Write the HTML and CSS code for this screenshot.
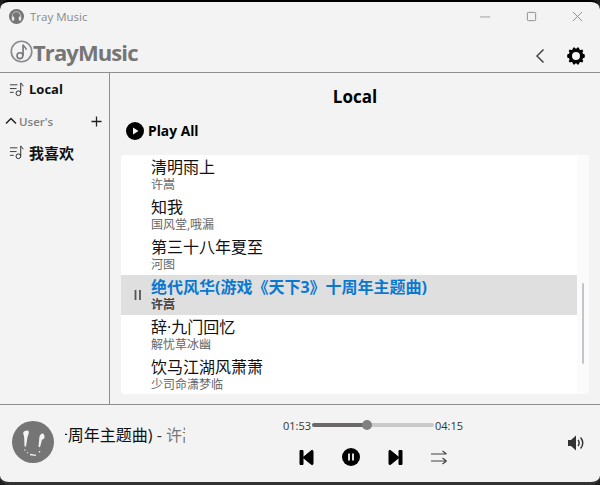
FILE: index.html
```html
<!DOCTYPE html>
<html lang="zh">
<head>
<meta charset="utf-8">
<title>Tray Music</title>
<link rel="stylesheet" href="styles.css">
</head>
<body>
<div class="window">
  <div class="titlebar">
    <svg class="app-icon" viewBox="0 0 16 16"><circle cx="8" cy="8" r="8" fill="#757575"/><path d="M3.500 9V7.500a4.500 4.500 0 0 1 9 0V9" stroke="#bdbdbd" stroke-width="1.100" fill="none"/><rect x="3" y="8" width="2.600" height="4.500" rx="1" fill="#e6e6e6"/><rect x="10.400" y="8" width="2.600" height="4.500" rx="1" fill="#e6e6e6"/></svg>
    <span class="app-title">Tray Music</span>
    <div class="win-buttons">
      <svg class="win-btn" viewBox="0 0 12 12"><path d="M0 6.500h11" stroke="#999" fill="none"/></svg>
      <svg class="win-btn" viewBox="0 0 12 12"><rect x="1.500" y="1.500" width="9" height="9" rx="1" stroke="#888" fill="none"/></svg>
      <svg class="win-btn" viewBox="0 0 12 12"><path d="M1 1l10 10M11 1L1 11" stroke="#888" fill="none"/></svg>
    </div>
  </div>
  <header class="header">
    <div class="logo">
      <svg class="logo-icon" viewBox="0 0 22 22"><circle cx="11" cy="11" r="9.800" fill="none" stroke="#8a8a90" stroke-width="1.600"/><path d="M12.500 4.500v10.500" stroke="#77777c" stroke-width="1.600" fill="none"/><path d="M12.500 4.500c.4 2.200 3.400 2.500 3 5" stroke="#77777c" stroke-width="1.400" fill="none"/><circle cx="9.500" cy="15" r="2.800" fill="none" stroke="#77777c" stroke-width="1.500"/></svg>
      <span class="logo-text">TrayMusic</span>
    </div>
    <div class="header-actions">
      <svg class="back" viewBox="0 0 10 16"><path d="M8.500 1.500L2 8l6.500 6.500" stroke="#444" stroke-width="1.500" fill="none"/></svg>
      <svg class="gear" viewBox="0 0 18 18"><path fill-rule="evenodd" fill="#000" d="M6.300 .6h1.500l.4 1h1.600l.4-1h1.500l1 2.200 1.100.1 1.500-.3 1 1.400-.9 1.500.6 1.200 1.800.9v2.800l-1.800.9-.6 1.200.9 1.500-1 1.400-1.500-.3-1.100.1-1 2.200h-1.500l-.4-1H8.200l-.4 1H6.300l-1-2.200-1.100-.1-1.500.3-1-1.400.9-1.500-.6-1.200L.2 10.400V7.600l1.800-.9.6-1.200-.9-1.500 1-1.400 1.500.3 1.100-.1zM9 5a4 4 0 1 0 0 8 4 4 0 0 0 0-8z"/></svg>
    </div>
  </header>
  <div class="content">
    <aside class="sidebar">
      <div class="side-item">
        <svg class="list-icon" viewBox="0 0 16 16"><path d="M1 3h8M1 7h7M1 11h4" stroke="#333" fill="none"/><path d="M12.500 1v11" stroke="#222" fill="none"/><path d="M12.500 1c.3 1.500 2.500 1.500 2.500 3.500" stroke="#222" fill="none"/><circle cx="10" cy="12" r="2.500" fill="none" stroke="#222"/></svg>
        <span class="side-local">Local</span>
      </div>
      <div class="side-group">
        <svg class="chev" viewBox="0 0 12 8"><path d="M1 6.500l5-5 5 5" stroke="#222" stroke-width="1.500" fill="none"/></svg>
        <span class="group-name">User's</span>
        <svg class="plus" viewBox="0 0 12 12"><path d="M6 .5v11M.5 6h11" stroke="#222" stroke-width="1.400" fill="none"/></svg>
      </div>
      <div class="side-item side-fav">
        <svg class="list-icon" viewBox="0 0 16 16"><path d="M1 3h8M1 7h7M1 11h4" stroke="#333" fill="none"/><path d="M12.500 1v11" stroke="#222" fill="none"/><path d="M12.500 1c.3 1.500 2.500 1.500 2.500 3.500" stroke="#222" fill="none"/><circle cx="10" cy="12" r="2.500" fill="none" stroke="#222"/></svg>
        <span class="fav-name">我喜欢</span>
      </div>
    </aside>
    <main class="main">
      <h1 class="heading">Local</h1>
      <div class="play-all">
        <svg class="play-all-icon" viewBox="0 0 18 18"><circle cx="9" cy="9" r="9" fill="#000"/><path d="M7 5.500v7L12.500 9z" fill="#f3f3f3"/></svg>
        <span>Play All</span>
      </div>
      <div class="list">
        <div class="rows">
          <div class="row"><div class="t">清明雨上</div><div class="s">许嵩</div></div>
          <div class="row"><div class="t">知我</div><div class="s">国风堂,哦漏</div></div>
          <div class="row"><div class="t">第三十八年夏至</div><div class="s">河图</div></div>
          <div class="row active">
            <svg class="pause" viewBox="0 0 8 12"><path d="M1.500 1v10M6 1v10" stroke="#555" stroke-width="1.800" fill="none"/></svg>
            <div class="t">绝代风华(游戏《天下3》十周年主题曲)</div><div class="s">许嵩</div>
          </div>
          <div class="row"><div class="t">辞·九门回忆</div><div class="s">解忧草冰幽</div></div>
          <div class="row"><div class="t">饮马江湖风萧萧</div><div class="s">少司命潇梦临</div></div>
        </div>
        <div class="scroll"><div class="thumb"></div></div>
      </div>
    </main>
  </div>
  <footer class="player">
    <svg class="cover" viewBox="0 0 42 42"><circle cx="21" cy="21" r="21" fill="#757575"/><path d="M11 13c0-2.500 2-3.500 4.500-3.500 1.500 0 1.500 2 1 3.500l-1 3-1.500 9.500h-1.500l-.3-9c-.2-1.500-.7-2.500-.7-3.500zM32.500 15c.5 2-1 3.500-2.500 3.800l-2 7.500-1.500-.5.800-9c.3-2.500 1.700-4.300 3.200-4.300 1 0 1.700 1.200 2 2.500z" fill="#f4f4f4"/><path d="M12.500 28.500l.6 1M15 31.500l1 .5M18 33.500l6 .8M27 31.500l1-1.500" stroke="#eee" stroke-width="1.300" fill="none"/></svg>
    <div class="marquee"><span class="m-inner">绝代风华(游戏《天下3》十周年主题曲)<span class="m-sep"> - </span><span class="m-artist">许嵩</span></span></div>
    <div class="center">
      <div class="progress">
        <span class="time">01:53</span>
        <div class="bar"><div class="bar-fill"></div><div class="bar-knob"></div></div>
        <span class="time">04:15</span>
      </div>
      <div class="controls">
        <svg class="c-skip" viewBox="0 0 15 17"><path d="M1 1.500h3v14H1zM4 8.500L12.500 1.500c1-.5 1.500 0 1.500 1v12c0 1-.5 1.500-1.500 1z" fill="#000" stroke="#000" stroke-linejoin="round"/></svg>
        <svg class="c-pause" viewBox="0 0 18 18"><circle cx="9" cy="9" r="9" fill="#000"/><path d="M7 5.500v7M11 5.500v7" stroke="#f3f3f3" stroke-width="1.800"/></svg>
        <svg class="c-skip" viewBox="0 0 15 17"><path d="M14 1.500h-3v14h3zM11 8.500L2.500 1.500c-1-.5-1.500 0-1.500 1v12c0 1 .5 1.500 1.500 1z" fill="#000" stroke="#000" stroke-linejoin="round"/></svg>
        <svg class="c-mode" viewBox="0 0 17 15"><path d="M0 4h15M11.500 1L15.500 4M0 11h15M11.500 14L15.500 11M11.500 8L15.500 11" stroke="#444" stroke-width="1.200" fill="none"/></svg>
      </div>
    </div>
    <svg class="volume" viewBox="0 0 18 18"><path d="M1 6h3l5-4.500v15L4 12H1z" fill="#333"/><path d="M11 6c1.500 1.500 1.500 4.500 0 6M13.500 3.500c3 3 3 8 0 11" stroke="#333" stroke-width="1.500" fill="none"/></svg>
  </footer>
</div>
</body>
</html>
```

FILE: styles.css
```css
* { box-sizing: border-box; }
html, body { margin: 0; padding: 0; height: 100%; background: #1e1e1e; overflow: hidden; }
body { font-family: "Open Sans", "Noto Sans CJK SC", sans-serif; color: #000; }
.window {
  width: 600px; height: 485px; background: #f3f3f3;
  border-top: 2px solid #000; border-bottom: 3px solid #333;
  border-radius: 9px;
  display: flex; flex-direction: column; overflow: hidden;
}
.titlebar { height: 30px; display: flex; align-items: center; padding: 0 0 2px 9px; flex: none; }
.app-icon { width: 15px; height: 15px; }
.app-title { font-size: 11.5px; color: #8a8a8a; margin-left: 6px; }
.win-buttons { margin-left: auto; display: flex; gap: 35px; padding-right: 17px; }
.win-btn { width: 11px; height: 11px; }
.header {
  height: 41px; flex: none; display: flex; align-items: center; justify-content: space-between;
  border-bottom: 1px solid #8f8f8f; padding: 0 15px 0 10px;
}
.logo { display: flex; align-items: center; margin-top: -1px; }
.logo-icon { width: 23px; height: 23px; }
.logo-text { font-size: 22px; font-weight: 700; color: #767676; letter-spacing: -0.9px; font-family: "Open Sans", sans-serif; }
.header-actions { display: flex; align-items: center; gap: 22px; margin-top: 8px; }
.back { width: 10px; height: 16px; }
.gear { width: 18px; height: 18px; }
.content { flex: 1; min-height: 0; display: flex; border-bottom: 1px solid #8f8f8f; }
.sidebar { width: 110px; flex: none; border-right: 1px solid #8f8f8f; padding: 7px 0 0 9px; }
.side-item { display: flex; align-items: center; gap: 5px; height: 18px; }
.list-icon { width: 15px; height: 15px; }
.side-local { font-size: 13px; font-weight: 700; color: #111; }
.side-group { display: flex; align-items: center; margin: 15px 7px 0 -4px; height: 16px; }
.chev { width: 12px; height: 8px; }
.group-name { font-size: 11.5px; color: #808080; margin-left: 2px; font-weight: 600; }
.plus { width: 11px; height: 11px; margin-left: auto; }
.side-fav { margin-top: 13px; height: 20px; }
.fav-name { font-size: 15px; font-weight: 700; color: #111; }
.main { flex: 1; min-width: 0; padding: 0 11px 10px 11px; display: flex; flex-direction: column; }
.heading { margin: 12px 0 0; font-size: 17px; font-weight: 700; text-align: center; line-height: 24px; height: 24px; }
.play-all { display: flex; align-items: center; gap: 4px; margin: 12px 0 0 5px; height: 20px; font-size: 13.8px; font-weight: 700; }
.play-all-icon { width: 18px; height: 18px; }
.list { margin-top: 14px; height: 240px; width: 468px; background: #fbfbfb; border-radius: 4px; display: flex; overflow: hidden; }
.rows { width: 456px; background: #fff; flex: none; }
.row { height: 40px; padding: 2px 0 0 30px; position: relative; }
.t { font-size: 16px; line-height: 20px; color: #111; white-space: nowrap; }
.s { font-size: 12px; line-height: 16px; color: #666; white-space: nowrap; }
.active { background: #dfdfdf; }
.active .t { color: #0a78d0; font-weight: 700; }
.active .s { color: #444; font-weight: 700; }
.pause { position: absolute; left: 13px; top: 14px; width: 8px; height: 12px; }
.scroll { flex: 1; padding: 128px 0 0 5px; }
.thumb { width: 2px; height: 81px; background: #c4c4cc; border-radius: 1px; }
.player { height: 77px; flex: none; display: flex; align-items: flex-start; position: relative; padding-left: 12px; }
.cover { width: 42px; height: 42px; flex: none; margin-top: 16px; }
.marquee { width: 120px; margin: 20px 0 0 11px; overflow: hidden; flex: none; }
.m-inner { display: block; white-space: nowrap; margin-left: -187px; font-size: 16px; line-height: 20px; color: #111; }
.m-sep { color: #333; }
.m-artist { color: #777; }
.center { width: 180px; margin-left: 98px; flex: none; padding-top: 12px; }
.progress { display: flex; align-items: center; font-size: 11px; color: #333; height: 16px; }
.bar { flex: 1; height: 4px; background: #c9c9c9; position: relative; margin: 0 1px; border-radius: 2px; }
.bar-fill { width: 55px; height: 4px; background: #6d6868; border-radius: 2px; }
.bar-knob { position: absolute; left: 50px; top: -3px; width: 10px; height: 10px; background: #808080; border-radius: 50%; }
.controls { display: flex; align-items: center; margin: 15px 0 0 16px; }
.c-skip { width: 15px; height: 17px; }
.c-pause { width: 18px; height: 18px; margin: 0 28px 0 28px; }
.c-mode { width: 17px; height: 15px; margin-left: 28px; }
.volume { width: 18px; height: 18px; position: absolute; right: 15px; top: 29px; }
```
